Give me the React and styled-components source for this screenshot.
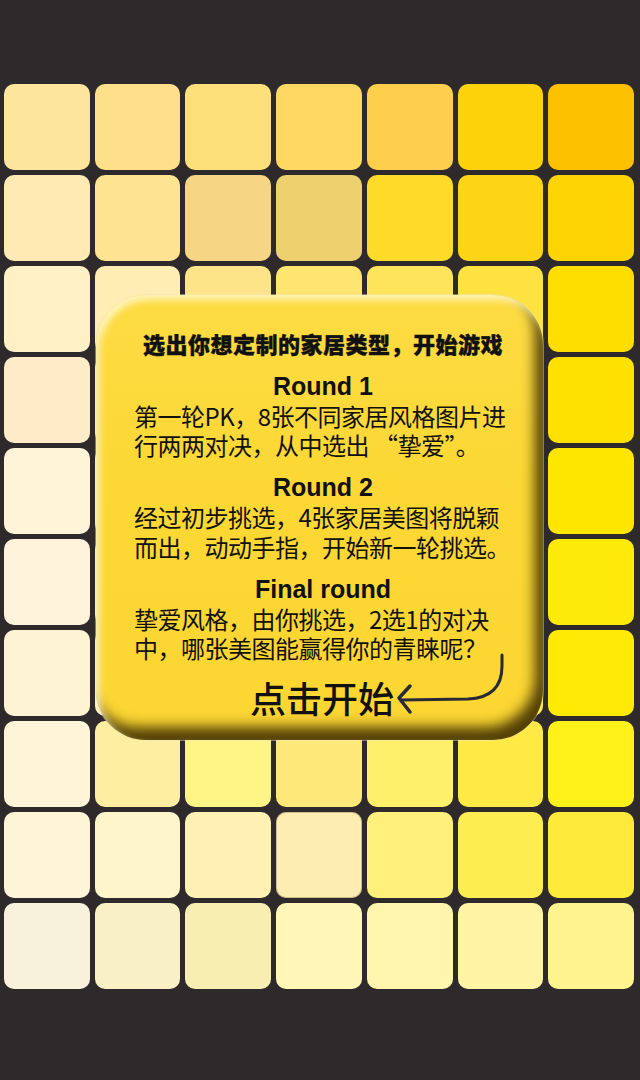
import React from "react";
import styled, { createGlobalStyle } from "styled-components";

const GlobalStyle = createGlobalStyle`
  body {
    margin: 0;
    background-color: #2e2a2b;
    font-family: "Noto Sans CJK SC", "Noto Sans", sans-serif;
  }
`;

// tile colours, row by row (7 per row)
const palette = [
  ["#fee59d", "#fee08b", "#fee07a", "#fed862", "#fecf4c", "#fdd20b", "#fec100"],
  ["#feeab2", "#fee393", "#f6d585", "#ecd16e", "#fedb28", "#fed514", "#fed405"],
  ["#fff0c6", "#ffedb3", "#fee488", "#fee570", "#fee45a", "#fee242", "#fede00"],
  ["#feecc9", "#ffedb8", "#fee998", "#fee680", "#fee565", "#fee44a", "#fee100"],
  ["#fff3d8", "#fff0c0", "#ffeca2", "#feea88", "#fee86c", "#fee650", "#fee600"],
  ["#fff3dc", "#fff1c4", "#ffeea8", "#feec8c", "#feea70", "#fee856", "#fdea0a"],
  ["#fef3d3", "#fff2c2", "#fff0a4", "#feed88", "#feec6c", "#feea4c", "#feea05"],
  ["#fef5d8", "#feeea2", "#fff485", "#fee87a", "#fff06c", "#ffe944", "#fff11a"],
  ["#fef5d8", "#fff5cb", "#fff0b4", "#feedb0", "#fff07c", "#feed50", "#feea3a"],
  ["#f8f2dc", "#f9f0c5", "#f9eeb2", "#fff6b8", "#fff5ad", "#fff4a4", "#fff38e"],
];

const Page = styled.div`
  position: relative;
  width: 640px;
  height: 1080px;
  padding-top: 84px;
  box-sizing: border-box;
  overflow: hidden;
`;

const Board = styled.div`
  display: grid;
  grid-template-columns: repeat(7, 1fr);
  grid-auto-rows: 86px;
  gap: 5px;
  width: 630px;
  margin-left: 4px;
`;

const Tile = styled.div`
  border-radius: 10px;
  background-color: ${(p) => p.$color};
  box-shadow: ${(p) =>
    p.$outlined ? "inset 0 0 0 1px rgba(120, 100, 60, 0.35)" : "none"};
`;

const Card = styled.div`
  position: absolute;
  left: 96px;
  top: 295px;
  width: 447px;
  height: 445px;
  box-sizing: border-box;
  padding: 33px 31px 0 38px;
  border-radius: 50px;
  background: linear-gradient(180deg, #fddc44 0%, #fcd835 40%, #fcd632 100%);
  box-shadow: inset 4px 5px 7px rgba(255, 248, 205, 0.85),
    inset -8px -13px 13px rgba(62, 46, 0, 0.9),
    0 0 0 1px rgba(235, 228, 200, 0.45);
  display: flex;
  flex-direction: column;
  color: #111;
`;

const Intro = styled.div`
  font-size: 22px;
  line-height: 30px;
  font-weight: 900;
  letter-spacing: 0.5px;
  -webkit-text-stroke: 0.4px #111;
  text-align: center;
  white-space: nowrap;
`;

const RoundTitle = styled.div`
  margin-top: 12.5px;
  font-family: "Liberation Sans", Arial, sans-serif;
  font-weight: 700;
  font-size: 25px;
  line-height: 30px;
  text-align: center;
`;

const RoundText = styled.p`
  margin: 0;
  font-size: 24px;
  line-height: 29.5px;
  letter-spacing: -0.5px;
  white-space: nowrap;
`;

const StartRow = styled.div`
  display: flex;
  align-items: flex-start;
  margin-top: 14px;
  padding-left: 116px;
`;

const StartLabel = styled.span`
  font-size: 36px;
  line-height: 40px;
  font-weight: 500;
  cursor: pointer;
`;

const ArrowIcon = styled.svg`
  margin-top: -25px;
  margin-left: 2px;
  flex: none;
`;

const rounds = [
  {
    title: "Round 1",
    lines: ["第一轮PK，8张不同家居风格图片进", "行两两对决，从中选出 “挚爱”。"],
  },
  {
    title: "Round 2",
    lines: ["经过初步挑选，4张家居美图将脱颖", "而出，动动手指，开始新一轮挑选。"],
  },
  {
    title: "Final round",
    lines: ["挚爱风格，由你挑选，2选1的对决", "中，哪张美图能赢得你的青睐呢？"],
  },
];

const Arrow = () => (
  <ArrowIcon width="112" height="66" viewBox="0 0 112 66">
    <path
      d="M106 3 L106 14 C106 34 96 46 72 47 L5 48"
      fill="none"
      stroke="#2a2a36"
      strokeWidth="3"
      strokeLinecap="round"
    />
    <path
      d="M14 34 L3 46 L14 60"
      fill="none"
      stroke="#2a2a36"
      strokeWidth="3.5"
      strokeLinecap="round"
      strokeLinejoin="round"
    />
  </ArrowIcon>
);

export default function App() {
  return (
    <Page>
      <GlobalStyle />
      <Board>
        {palette.map((row, r) =>
          row.map((c, i) => (
            <Tile key={`${r}-${i}`} $color={c} $outlined={r === 8 && i === 3} />
          ))
        )}
      </Board>
      <Card>
        <Intro>选出你想定制的家居类型，开始游戏</Intro>
        {rounds.map((round) => (
          <React.Fragment key={round.title}>
            <RoundTitle>{round.title}</RoundTitle>
            <RoundText>
              {round.lines[0]}
              <br />
              {round.lines[1]}
            </RoundText>
          </React.Fragment>
        ))}
        <StartRow>
          <StartLabel>点击开始</StartLabel>
          <Arrow />
        </StartRow>
      </Card>
    </Page>
  );
}
